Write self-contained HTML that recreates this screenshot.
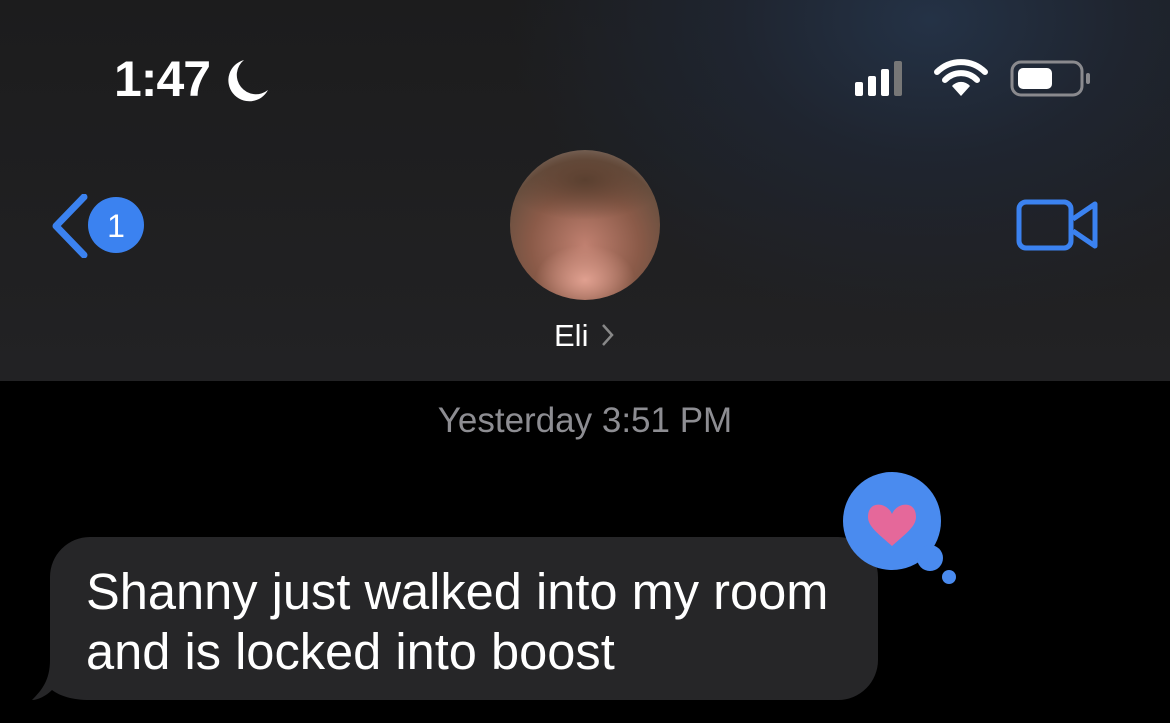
<!DOCTYPE html><html><head><style>
body{margin:0;width:1170px;height:723px;background:#000;overflow:hidden;position:relative;font-family:"Liberation Sans",sans-serif}
.hdr{position:absolute;left:0;top:0;width:1170px;height:381px;background:radial-gradient(ellipse 420px 300px at 930px 20px,#243246 0%,#1f2530 45%,rgba(30,30,32,0) 100%),linear-gradient(#1c1c1d,#222224)}
.t{position:absolute;color:#fff}
</style></head><body>
<div class="hdr"></div>
<div class="t" style="left:114px;top:50px;font-size:50px;font-weight:bold;letter-spacing:-1px">1:47</div>
<svg class="t" style="left:226px;top:56px" width="44" height="48" viewBox="0 0 44 48"><path d="M18 4 A21 21 0 1 0 42 34 A18 18 0 0 1 18 4Z" fill="#fff"/></svg>
<svg class="t" style="left:855px;top:58px" width="240" height="42" viewBox="0 0 240 42">
<rect x="0" y="24" width="8" height="14" rx="2" fill="#fff"/><rect x="13" y="18" width="8" height="20" rx="2" fill="#fff"/><rect x="26" y="11" width="8" height="27" rx="2" fill="#fff"/><rect x="39" y="3" width="8" height="35" rx="2" fill="#777"/>
<path d="M82 14 A34 34 0 0 1 130 14 M90 22 A22 22 0 0 1 122 22" stroke="#fff" stroke-width="6" fill="none" stroke-linecap="round"/><path d="M97 28 A12 12 0 0 1 115 28 L106 38Z" fill="#fff"/>
<rect x="157" y="4" width="70" height="33" rx="9" fill="none" stroke="#8a8a8e" stroke-width="3"/><rect x="163" y="10" width="34" height="21" rx="5" fill="#fff"/><rect x="231" y="15" width="4" height="11" rx="2" fill="#8a8a8e"/></svg>
<svg class="t" style="left:48px;top:194px" width="100" height="64" viewBox="0 0 100 64"><path d="M36 3 L8 32 L36 61" stroke="#3b82f0" stroke-width="7" fill="none" stroke-linecap="round" stroke-linejoin="round"/><circle cx="68" cy="31" r="28" fill="#3b82f0"/><text x="68" y="43" font-size="32" fill="#fff" text-anchor="middle" font-family="Liberation Sans">1</text></svg>
<div style="position:absolute;left:510px;top:150px;width:150px;height:150px;border-radius:50%;background:radial-gradient(ellipse 50px 35px at 75px 130px,#e0a090,rgba(0,0,0,0)),radial-gradient(ellipse 80px 40px at 75px 30px,#5a4030,rgba(0,0,0,0)),radial-gradient(circle at 75px 95px,#c08070 0%,#8a5a48 45%,#6a5040 70%,#a8a8a8 100%)"></div>
<div class="t" style="left:554px;top:318px;font-size:31px">Eli</div>
<svg class="t" style="left:600px;top:322px" width="16" height="26"><path d="M3 3 L12 13 L3 23" stroke="#888" stroke-width="2.5" fill="none"/></svg>
<svg class="t" style="left:1016px;top:198px" width="84" height="54" viewBox="0 0 84 54"><rect x="3" y="4" width="52" height="46" rx="7" fill="none" stroke="#3b82f0" stroke-width="5"/><path d="M57 21 L79 6 L79 48 L57 33" fill="none" stroke="#3b82f0" stroke-width="5" stroke-linejoin="round"/></svg>
<div class="t" style="left:0;width:1170px;text-align:center;top:401px;font-size:35px;color:#8d8d92">Yesterday 3:51 PM</div>
<svg style="position:absolute;left:0;top:0" width="1170" height="723"><path d="M90 537 H838 A40 40 0 0 1 878 577 V660 A40 40 0 0 1 838 700 H90 C72 700 60 696 52 690 C46 696 38 700 32 700 C42 690 50 680 50 660 V577 A40 40 0 0 1 90 537Z" fill="#262628"/>
<circle cx="892" cy="521" r="49" fill="#4a8bef"/><circle cx="930" cy="558" r="13" fill="#4a8bef"/><circle cx="949" cy="577" r="7" fill="#4a8bef"/>
<path d="M892 514 C887 502 868 500 868 517 C868 527 880 535 892 546 C904 535 916 527 916 517 C916 500 897 502 892 514Z" fill="#e5689a"/></svg>
<div class="t" style="left:86px;top:562px;font-size:50.6px;line-height:60px">Shanny just walked into my room<br>and is locked into boost</div>
</body></html>
